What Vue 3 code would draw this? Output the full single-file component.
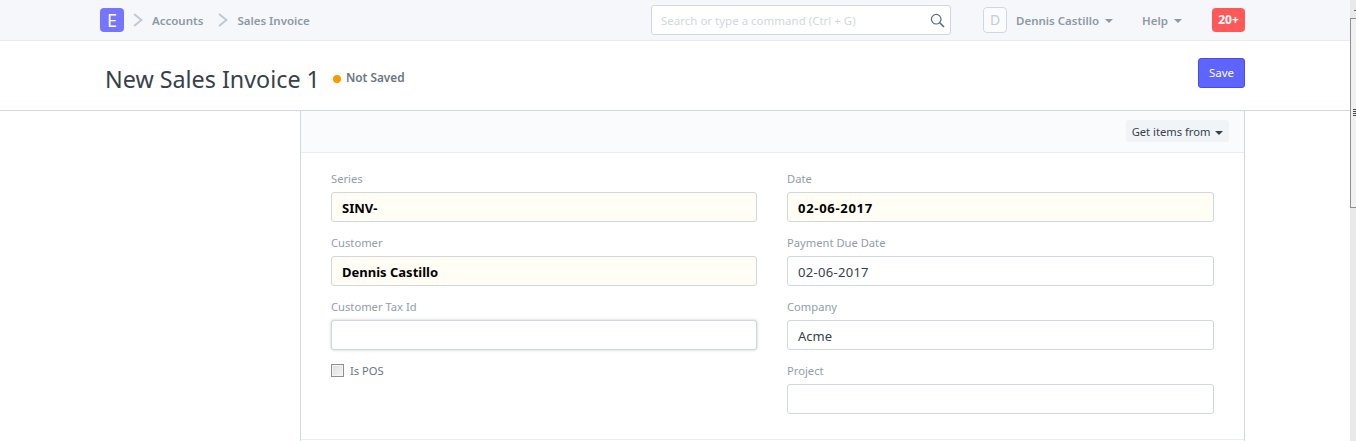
<script setup>
const left = [
  { label: 'Series', value: 'SINV-', filled: true },
  { label: 'Customer', value: 'Dennis Castillo', filled: true },
  { label: 'Customer Tax Id', value: '', focus: true },
]
const right = [
  { label: 'Date', value: '02-06-2017', filled: true, num: true },
  { label: 'Payment Due Date', value: '02-06-2017', num: true },
  { label: 'Company', value: 'Acme' },
  { label: 'Project', value: '' },
]
</script>

<template>
  <div class="page">
    <div class="main">
      <header class="nav">
        <div class="logo">E</div>
        <svg class="chev first" width="10" height="14" viewBox="0 0 10 14"><path d="M1 1 8.500 7 1 13" fill="none" stroke="#c0c9d3" stroke-width="2"/></svg>
        <span class="crumb accounts">Accounts</span>
        <svg class="chev second" width="10" height="14" viewBox="0 0 10 14"><path d="M1 1 8.500 7 1 13" fill="none" stroke="#c0c9d3" stroke-width="2"/></svg>
        <span class="crumb">Sales Invoice</span>
        <div class="search">
          <span>Search or type a command (Ctrl + G)</span>
          <svg width="15" height="15" viewBox="0 0 15 15"><circle cx="6.200" cy="6.200" r="4.800" fill="none" stroke="#5c6b78" stroke-width="1.200"/><path d="M9.800 9.800 14 14" stroke="#5c6b78" stroke-width="1.600"/></svg>
        </div>
        <div class="avatar">D</div>
        <span class="menu user">Dennis Castillo<i class="caret"></i></span>
        <span class="menu help">Help<i class="caret"></i></span>
        <span class="badge">20+</span>
      </header>

      <section class="title-row">
        <h1>New Sales Invoice 1</h1>
        <i class="dot"></i>
        <span class="status">Not Saved</span>
        <button class="save">Save</button>
      </section>

      <section class="body">
        <div class="card">
          <div class="toolbar">
            <button class="get">Get items from <i class="caret dark"></i></button>
          </div>
          <div class="form">
            <div class="col">
              <div v-for="f in left" :key="f.label" class="field">
                <label>{{ f.label }}</label>
                <div class="input" :class="{ filled: f.filled, focus: f.focus }">{{ f.value }}</div>
              </div>
              <label class="check"><i class="box"></i>Is POS</label>
            </div>
            <div class="col">
              <div v-for="f in right" :key="f.label" class="field">
                <label>{{ f.label }}</label>
                <div class="input" :class="{ filled: f.filled, num: f.num }">{{ f.value }}</div>
              </div>
            </div>
          </div>
        </div>
      </section>
    </div>
    <div class="scrollbar"><i class="arrow"></i><i class="thumb"><b></b></i></div>
  </div>
</template>

<style>
html, body { margin: 0; overflow: hidden; background: #fff; }
</style>

<style scoped>
.page { display: flex; width: 1356px; height: 441px; overflow: hidden; font-family: "Noto Sans", "Open Sans", sans-serif; color: #36414c; }
.main { width: 1350px; flex: none; display: flex; flex-direction: column; }
.scrollbar { width: 6px; flex: none; background: #e9e9e9; position: relative; }
.arrow { position: absolute; left: 4px; top: 10px; width: 2px; height: 1px; background: #666; }
.thumb { position: absolute; left: 0; top: 18px; width: 6px; height: 190px; background: #f1f1f1; border: 1px solid #8f8f8f; border-right: 0; box-sizing: border-box; }
.thumb b { position: absolute; left: 2px; top: 90px; width: 3px; height: 8px; background: repeating-linear-gradient(#444 0 1px, transparent 1px 2px); }
.nav { height: 40px; flex: none; background: #f5f7fa; border-bottom: 1px solid #e8ebef; display: flex; align-items: center; padding-left: 100px; font-size: 11.500px; font-weight: 600; color: #8d99a6; }
.logo { width: 24px; height: 24px; border-radius: 4px; background: #7575ff; color: #fff; font-size: 18px; font-weight: 400; text-align: center; line-height: 24px; flex: none; }
.chev { flex: none; }
.chev.first { margin-left: 9px; }
.chev.second { margin-left: 15px; }
.crumb { margin-left: 9px; white-space: nowrap; }
.search { margin-left: auto; width: 300px; height: 30px; flex: none; box-sizing: border-box; border: 1px solid #d1d8dd; border-radius: 3px; background: #fff; display: flex; align-items: center; justify-content: space-between; padding: 0 5px 0 9px; font-size: 11.500px; font-weight: 400; color: #d1d8dd; }
.avatar { margin-left: 32px; width: 24px; height: 26px; flex: none; box-sizing: border-box; border: 1px solid #d1d8dd; border-radius: 4px; background: #fafbfc; font-size: 14px; font-weight: 400; color: #c5ccd3; text-align: center; line-height: 24px; }
.menu { line-height: 17px; white-space: nowrap; flex: none; }
.user { margin-left: 9px; width: 126px; }
.help { width: 70px; }
.caret { display: inline-block; width: 0; height: 0; border: 4px solid transparent; border-top-color: currentColor; border-bottom: 0; margin-left: 6px; vertical-align: 2px; }
.caret.dark { color: #36414c; margin-left: 2px; vertical-align: 1px; }
.badge { margin-right: 105px; width: 33px; height: 24px; flex: none; border-radius: 4px; background: #ff5858; color: #fff; font-size: 12px; font-weight: 700; text-align: center; line-height: 24px; }
.title-row { height: 70px; flex: none; box-sizing: border-box; border-bottom: 1px solid #d1d8dd; display: flex; align-items: center; padding: 0 105px; }
h1 { margin: 0; font-size: 23.300px; font-weight: 400; line-height: 30px; color: #36414c; position: relative; top: 3px; white-space: nowrap; }
.dot { width: 8px; height: 8px; border-radius: 50%; background: #ff9800; margin-left: 13px; flex: none; position: relative; top: 3px; }
.status { margin-left: 5px; font-size: 11.800px; font-weight: 600; color: #6c7680; position: relative; top: 1px; }
.save { margin-left: auto; position: relative; top: -3px; width: 47px; height: 30px; flex: none; box-sizing: border-box; padding: 0; border: 1px solid #4c4ce0; border-radius: 3px; background: #5e64ff; color: #fff; font: 400 11.500px "Noto Sans", sans-serif; }
.body { flex: 1; padding-left: 300px; min-height: 0; }
.card { width: 945px; height: 330px; box-sizing: border-box; border-left: 1px solid #d1d8dd; border-right: 1px solid #d1d8dd; }
.toolbar { height: 42px; box-sizing: border-box; background: #fafbfc; border-bottom: 1px solid #ebeff2; display: flex; justify-content: flex-end; align-items: center; padding: 0 15px 1px 0; }
.get { height: 22px; width: 103px; border: 0; border-radius: 3px; padding: 0; background: #f0f4f7; color: #36414c; font: 400 11.200px "Noto Sans", sans-serif; white-space: nowrap; }
.form { display: grid; grid-template-columns: 426px 427px; column-gap: 30px; padding: 18px 0 0 30px; height: 287px; box-sizing: border-box; border-bottom: 1px solid #ebeff2; }
.col { display: flex; flex-direction: column; }
.field { height: 64px; flex: none; }
.field label { display: block; height: 21px; line-height: 16px; font-size: 11.200px; color: #929dab; }
.input { height: 30px; box-sizing: border-box; border: 1px solid #d1d8dd; border-radius: 3px; background: #fff; padding: 1px 10px 0; line-height: 28px; font-size: 13px; color: #36414c; }
.input.num { letter-spacing: .3px; }
.input.filled { background: #fffdf4; font-weight: 700; color: #000; }
.input.filled.num { letter-spacing: .7px; }
.input.focus { box-shadow: 0 0 3px rgba(120, 140, 160, .45); }
.check { display: flex; align-items: center; font-size: 11.200px; color: #6c7680; height: 14px; }
.box { width: 13px; height: 13px; flex: none; box-sizing: border-box; border: 1px solid #8f8f8f; background: linear-gradient(135deg, #dcdcdc, #f6f6f6); box-shadow: inset 0 0 0 1px #f4f4f4; margin-right: 6px; }
</style>
